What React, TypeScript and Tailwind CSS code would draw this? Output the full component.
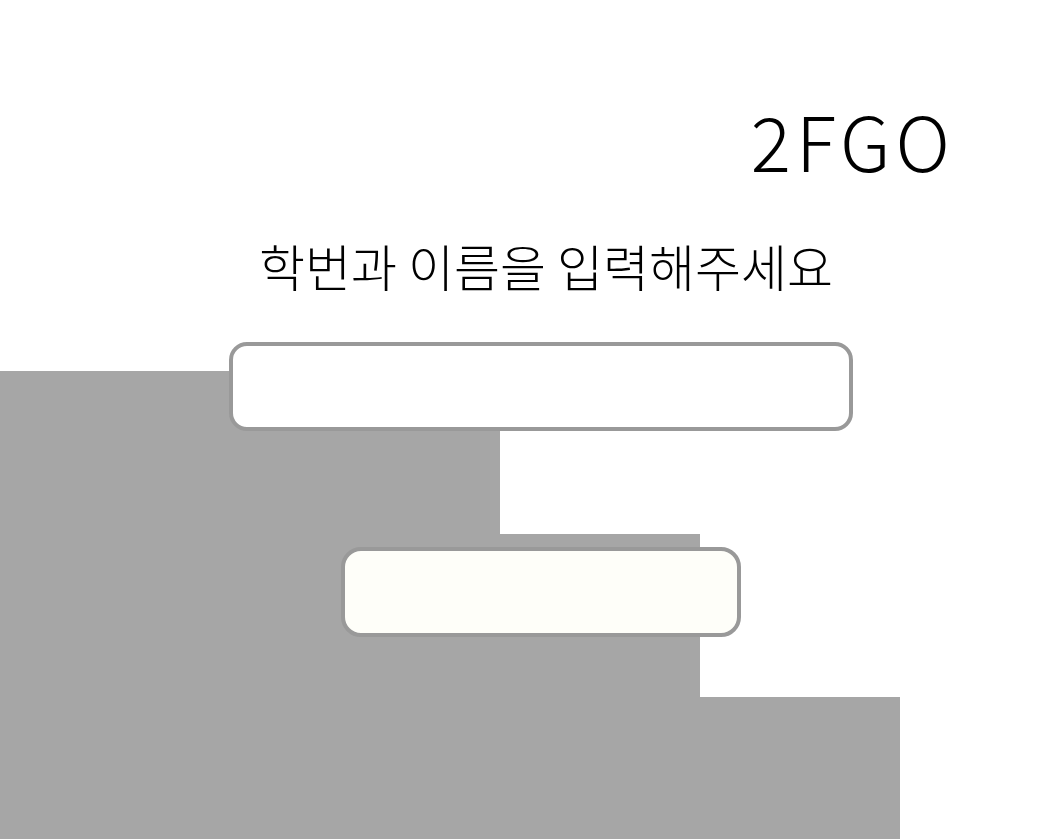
import { useState } from "react";

export default function App() {
  const [studentInfo, setStudentInfo] = useState("");

  return (
    <div className="relative min-h-screen w-full overflow-hidden bg-white font-['Noto_Sans_CJK_KR','Noto_Sans',sans-serif] text-black">
      {/* staircase backdrop */}
      <div className="absolute left-0 top-[371px] flex flex-col">
        <div className="h-[163px] w-[500px] bg-[#a6a6a6]" />
        <div className="h-[163px] w-[700px] bg-[#a6a6a6]" />
        <div className="h-[163px] w-[900px] bg-[#a6a6a6]" />
      </div>

      <div className="relative flex flex-col">
        <header className="flex justify-end pr-[86px] pt-[102px]">
          <h1 className="text-[75px] font-light leading-none tracking-[5px]">2FGO</h1>
        </header>

        <main className="flex flex-col items-center pl-[41px]">
          <h2 className="ml-[10px] mt-[63px] text-[50px] font-light leading-none">학번과 이름을 입력해주세요</h2>

          <input
            value={studentInfo}
            onChange={(e) => setStudentInfo(e.target.value)}
            className="mt-[52px] h-[89px] w-[624px] rounded-[18px] border-4 border-[#999999] bg-white px-6 text-2xl outline-none"
          />

          <button className="mt-[116px] h-[90px] w-[400px] rounded-[20px] border-4 border-[#999999] bg-[#fefef9]" />
        </main>
      </div>
    </div>
  );
}
